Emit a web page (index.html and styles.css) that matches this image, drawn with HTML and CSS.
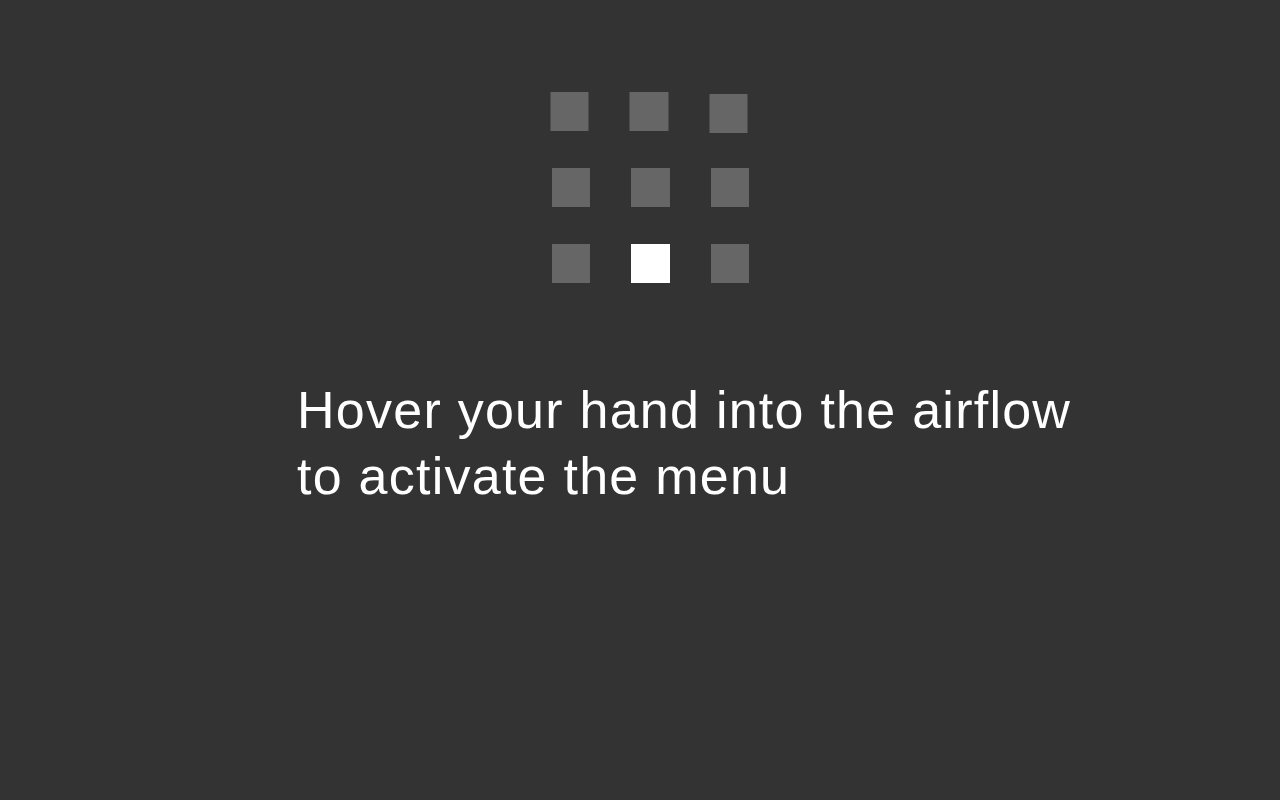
FILE: index.html
```html
<!DOCTYPE html>
<html lang="en">
<head>
<meta charset="utf-8">
<title>Airflow menu</title>
<link rel="stylesheet" href="styles.css">
</head>
<body>
<main class="screen">
  <div class="grid">
    <div class="cell shift-l"></div>
    <div class="cell shift-l"></div>
    <div class="cell shift-l shift-d"></div>
    <div class="cell"></div>
    <div class="cell"></div>
    <div class="cell"></div>
    <div class="cell"></div>
    <div class="cell active"></div>
    <div class="cell"></div>
  </div>
  <p class="hint">Hover your hand into the airflow<br>to activate the menu</p>
</main>
</body>
</html>
```

FILE: styles.css
```css
html, body {
  margin: 0;
  padding: 0;
  background: #333333;
  width: 1280px;
  height: 800px;
  overflow: hidden;
}

.screen {
  display: flex;
  flex-direction: column;
  align-items: flex-start;
  padding-top: 92px;
  height: 800px;
  box-sizing: border-box;
}

.grid {
  display: grid;
  grid-template-columns: repeat(3, 38.5px);
  grid-auto-rows: 38.5px;
  column-gap: 41px;
  row-gap: 37.5px;
  margin-left: 551.5px;
}

.cell {
  background: #666666;
}

.cell.shift-l {
  transform: translateX(-1.5px);
}

.cell.shift-l.shift-d {
  transform: translate(-1.5px, 2px);
}

.cell.active {
  background: #ffffff;
}

.hint {
  margin: 94px 0 0 297px;
  font-family: "Liberation Sans", Arial, sans-serif;
  font-size: 52px;
  line-height: 66px;
  letter-spacing: 1.25px;
  color: #ffffff;
  white-space: nowrap;
}
```
